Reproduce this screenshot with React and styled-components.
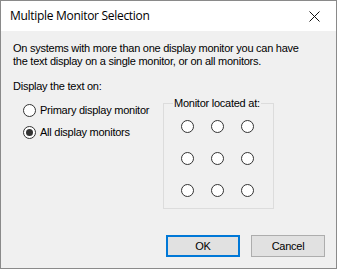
import React from 'react';
import styled, { createGlobalStyle } from 'styled-components';

const GlobalStyle = createGlobalStyle`
	html, body {
		margin: 0;
		padding: 0;
		background: #f0f0f0;
	}
	* {
		box-sizing: border-box;
	}
`;

const Window = styled.div`
	width: 337px;
	height: 269px;
	border: 1px solid #8a8a8a;
	background: #f0f0f0;
	display: flex;
	flex-direction: column;
	font-family: 'Liberation Sans', Arial, sans-serif;
	font-size: 11px;
	line-height: 13px;
	letter-spacing: -0.25px;
	color: #000;
`;

const TitleBar = styled.div`
	height: 30px;
	flex-shrink: 0;
	background: #fff;
	display: flex;
	align-items: center;
	justify-content: space-between;
	padding-left: 9px;
`;

const Title = styled.span`
	font-family: 'Open Sans', 'Noto Sans', sans-serif;
	font-size: 12px;
	letter-spacing: -0.3px;
	color: #000;
	padding-bottom: 1px;
`;

const CloseButton = styled.div`
	width: 46px;
	height: 30px;
	display: flex;
	align-items: center;
	justify-content: center;
	padding-left: 3px;
`;

const Body = styled.div`
	flex: 1;
	display: flex;
	flex-direction: column;
	padding: 11px 11px 11px 11px;
`;

const Intro = styled.p`
	margin: 0;
	padding-left: 1px;
`;

const Content = styled.div`
	display: flex;
	margin-top: 12px;
`;

const LeftColumn = styled.div`
	width: 151px;
	display: flex;
	flex-direction: column;
`;

const Label = styled.div`
	padding-left: 1px;
`;

const RadioRow = styled.label`
	display: flex;
	align-items: center;
	gap: 4px;
	height: 13px;
	margin-left: 11px;
	margin-top: ${(p) => p.$offset}px;
	white-space: nowrap;
`;

const RadioCircle = styled.span`
	width: 13px;
	height: 13px;
	border-radius: 50%;
	border: 1px solid #333;
	background: #fff;
	display: flex;
	align-items: center;
	justify-content: center;
	flex-shrink: 0;

	&::after {
		content: '';
		width: 7px;
		height: 7px;
		border-radius: 50%;
		background: #333;
		display: ${(p) => (p.$checked ? 'block' : 'none')};
	}
`;

const GroupBox = styled.fieldset`
	width: 111px;
	height: 112px;
	margin: 17px 0 0 0;
	border: 1px solid #dcdcdc;
	display: grid;
	grid-template-columns: repeat(3, 13px);
	grid-auto-rows: 13px;
	column-gap: 17px;
	row-gap: 19px;
	align-content: start;
	padding: 10px 0 0 17px;
`;

const Legend = styled.legend`
	margin-left: -8px;
	padding: 0 1px;
	line-height: 13px;
	white-space: nowrap;
`;

const Footer = styled.div`
	margin-top: auto;
	display: flex;
	justify-content: flex-end;
	gap: 11px;
`;

const Button = styled.button`
	width: 74px;
	height: 22px;
	padding: 0;
	font-family: 'Liberation Sans', Arial, sans-serif;
	font-size: 11px;
	letter-spacing: -0.25px;
	color: #000;
	background: #e1e1e1;
	border: ${(p) => (p.$default ? '2px solid #0078d7' : '1px solid #adadad')};
`;

const Radio = ({ checked, children, offset }) => (
	<RadioRow $offset={offset}>
		<RadioCircle $checked={checked} />
		{children}
	</RadioRow>
);

const App = () => {
	const cells = Array.from({ length: 9 }, (_, i) => i);

	return (
		<>
			<GlobalStyle />
			<Window>
				<TitleBar>
					<Title>Multiple Monitor Selection</Title>
					<CloseButton>
						<svg width="11" height="11" viewBox="0 0 11 11">
							<path d="M0.5 0.5 L10.5 10.5 M10.5 0.5 L0.5 10.5" stroke="#111" strokeWidth="1" />
						</svg>
					</CloseButton>
				</TitleBar>
				<Body>
					<Intro>
						On systems with more than one display monitor you can have
						<br />
						the text display on a single monitor, or on all monitors.
					</Intro>
					<Content>
						<LeftColumn>
							<Label>Display the text on:</Label>
							<Radio offset={11}>Primary display monitor</Radio>
							<Radio offset={9} checked>
								All display monitors
							</Radio>
						</LeftColumn>
						<GroupBox>
							<Legend>Monitor located at:</Legend>
							{cells.map((i) => (
								<RadioCircle key={i} />
							))}
						</GroupBox>
					</Content>
					<Footer>
						<Button $default>OK</Button>
						<Button>Cancel</Button>
					</Footer>
				</Body>
			</Window>
		</>
	);
};

export default App;
